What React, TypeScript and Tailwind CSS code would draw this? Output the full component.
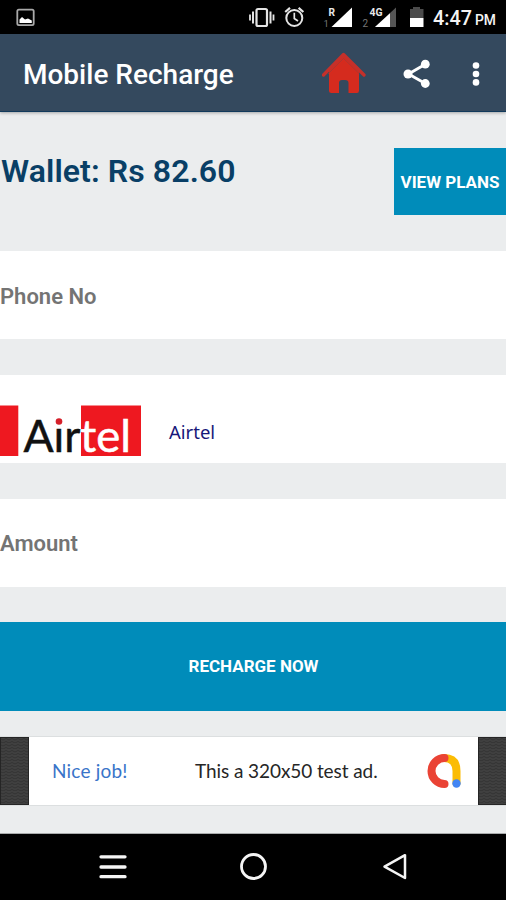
import React from "react";

function StatusBar() {
  return (
    <header className="h-[34px] w-full bg-black">
      <svg className="block" width="506" height="34" viewBox="0 0 506 34" fontFamily="Roboto, sans-serif">
        <rect x="17.3" y="9.6" width="16.4" height="15.6" rx="1.6" fill="none" stroke="#a9a9a9" strokeWidth="1.8" />
        <path d="M19.5 23V19.5L22 17L25 19.5L28 18.5L31.8 20.5V23Z" fill="#fff" />
        <g fill="none" stroke="#e4e4e4">
          <rect x="256.5" y="9" width="10.5" height="17" rx="1.5" strokeWidth="2.2" />
          <path d="M253 11.5V23.5M270.5 11.5V23.5" strokeWidth="2" />
          <path d="M250 14.5V20.5M273.5 14.5V20.5" strokeWidth="1.8" />
          <circle cx="294.3" cy="18" r="8" strokeWidth="2" />
          <path d="M294.3 12.8V18.5L298 21" strokeWidth="1.7" />
          <path d="M285.2 12L290 7.9M298.6 7.9L303.4 12" strokeWidth="2.2" />
        </g>
        <path d="M352 7.5V27H331.5Z" fill="#fff" />
        <text x="328.5" y="15.8" fontSize="11.5" fontWeight="700" fill="#e8e8e8" textLength="6.5" lengthAdjust="spacingAndGlyphs">R</text>
        <text x="323.5" y="27" fontSize="9.5" fill="#777">1</text>
        <path d="M396 7.5V27H375Z" fill="#555" />
        <path d="M390 13.2V27H375Z" fill="#fff" />
        <text x="369.5" y="15.8" fontSize="11.5" fontWeight="700" fill="#e8e8e8" textLength="13" lengthAdjust="spacingAndGlyphs">4G</text>
        <text x="362.5" y="27" fontSize="10" fill="#777">2</text>
        <path d="M410 9H413V7H420V9H423.5V18H410Z" fill="#4b4b4b" />
        <path d="M410 18H423.5V27H410Z" fill="#fff" />
        <text x="433" y="25" fontSize="19.5" fontWeight="500" fill="#f4f4f4" textLength="39" lengthAdjust="spacingAndGlyphs">4:47</text>
        <text x="475" y="25" fontSize="14" fontWeight="500" fill="#f4f4f4" textLength="21" lengthAdjust="spacingAndGlyphs">PM</text>
      </svg>
    </header>
  );
}

function AppBar() {
  return (
    <div className="flex h-[78px] items-center border-b border-[#123a5b] bg-[#34495e] pl-[23px] shadow-[0_1px_3px_rgba(0,0,0,0.3)]">
      <h1 className="w-[299px] whitespace-nowrap pt-[5px] text-[28px] font-medium leading-8 text-white">Mobile Recharge</h1>
      <svg width="44" height="42" viewBox="0 0 44 42" fill="#d52b1e">
        <path d="M21.5 2.2L7 16V38.5Q7 41 9.5 41H17V31Q17 28 20 28H23Q26.5 28 26.5 31V41H35Q37 41 37 38.5V16Z" />
        <path d="M1.5 23L21.5 2.5L42 23" fill="none" stroke="#c5302a" strokeWidth="3.3" strokeLinecap="round" strokeLinejoin="round" />
        <path d="M6 22L21.5 6.5L37.5 22" fill="none" stroke="#963a3b" strokeWidth="0.6" />
      </svg>
      <svg className="ml-[36px] mt-[2px]" width="30" height="34" viewBox="0 0 30 34">
        <path d="M23.3 7.2L6.5 17L23.3 26.5" fill="none" stroke="#fff" strokeWidth="2.9" />
        <g fill="#fff">
          <circle cx="23.3" cy="7.2" r="4.4" />
          <circle cx="6" cy="17" r="4.5" />
          <circle cx="23.3" cy="26.5" r="4.4" />
        </g>
      </svg>
      <svg className="ml-[38px] mt-[2px]" width="12" height="30" viewBox="0 0 12 30" fill="#fff">
        <circle cx="6" cy="6.5" r="3.3" />
        <circle cx="6" cy="15" r="3.3" />
        <circle cx="6" cy="23.4" r="3.3" />
      </svg>
    </div>
  );
}

function AirtelLogo() {
  return (
    <svg width="141" height="58" viewBox="0 0 141 58" fontFamily="Lato, sans-serif" fontSize="44">
      <path d="M0 0.500H18.300V51H0ZM81 0.500H141V51H81Z" fill="#ee1820" />
      <text x="23.500" y="47" fill="#111" stroke="#111" strokeWidth="0.500" textLength="57" lengthAdjust="spacingAndGlyphs">Aır</text>
      <text x="80" y="47" fill="#fff" stroke="#fff" strokeWidth="0.500" textLength="51" lengthAdjust="spacingAndGlyphs">tel</text>
      <circle cx="59" cy="16.500" r="3.300" fill="#d51f29" />
    </svg>
  );
}

function AdPattern() {
  return (
    <svg className="shrink-0" width="29" height="68">
      <defs>
        <pattern id="mesh" width="6" height="6" patternUnits="userSpaceOnUse">
          <path d="M0 1.500L3 3L6 1.500M0 4.500L3 6L6 4.500" fill="none" stroke="#323232" strokeWidth="1" />
        </pattern>
      </defs>
      <rect width="29" height="68" fill="#404040" />
      <rect width="29" height="68" fill="url(#mesh)" />
      <rect x="0.500" y="0.500" width="28" height="67" fill="none" stroke="#252525" />
    </svg>
  );
}

function AdBanner() {
  return (
    <div className="mt-[25px] flex h-[70px] overflow-hidden border-y border-[#dcdfe0] bg-white">
      <AdPattern />
      <div className="flex w-[449px] shrink-0 items-center whitespace-nowrap font-[Lato,sans-serif] text-[19px]">
        <span className="w-[142px] pl-[23px] pt-[1px] tracking-[0.2px] text-[#3974c9]">Nice job!</span>
        <span className="w-[254px] pl-[24px] pt-[1px] tracking-[-0.08px] text-[#262626]">This a 320x50 test ad.</span>
        <svg width="38" height="40" viewBox="0 0 38 40" fill="none" strokeLinecap="round" strokeWidth="8">
          <path d="M19 7Q31.5 7 31.5 20V32" stroke="#fbbc04" />
          <path d="M19.5 7A13 13 0 0 0 19.5 33" stroke="#ea4335" />
          <circle cx="31.5" cy="32.5" r="4.2" fill="#4285f4" />
        </svg>
      </div>
      <AdPattern />
    </div>
  );
}

function NavigationBar() {
  return (
    <nav className="h-[66px] bg-black">
      <svg className="block" width="506" height="66" viewBox="0 0 506 66" fill="none" stroke="#f5f5f5">
        <path d="M101 22.8H125M101 33H125M101 42.7H125" strokeWidth="3.3" strokeLinecap="round" />
        <circle cx="253.5" cy="32.5" r="12" strokeWidth="2.8" />
        <path d="M405 21.2V44L384.5 32.6Z" strokeWidth="2.5" strokeLinejoin="round" />
      </svg>
    </nav>
  );
}

export default function App() {
  return (
    <div className="flex h-[900px] w-[506px] flex-col overflow-hidden bg-[#ebedee] font-[Roboto,sans-serif]">
      <StatusBar />
      <AppBar />
      <main className="h-[722px] border-b border-[#a9abac]">
        <div className="flex h-[139px] items-start justify-between pt-[36px]">
          <div className="whitespace-nowrap pl-[1px] pt-[4px] text-[32px] font-semibold leading-[38px] tracking-[0.1px] text-[#093f66]">Wallet: Rs 82.60</div>
          <button className="h-[67px] w-[112px] whitespace-nowrap bg-[#008cba] pt-[3px] text-[17px] font-bold text-white">VIEW PLANS</button>
        </div>
        <div className="flex h-[88px] items-center bg-white pt-[2px] text-[22px] font-semibold text-[#747474]">Phone No</div>
        <div className="mt-[36px] flex h-[88px] items-start bg-white pt-[30px]">
          <AirtelLogo />
          <span className="ml-[28px] mt-[13px] font-['Noto_Sans',sans-serif] text-[18.5px] leading-7 text-[#171779]">Airtel</span>
        </div>
        <div className="mt-[36px] flex h-[88px] items-center bg-white text-[22px] font-semibold text-[#747474]">Amount</div>
        <button className="mt-[35px] flex h-[89px] w-full items-center justify-center bg-[#008cba] pl-[1px] pt-[1px] text-[17px] font-bold text-white">RECHARGE NOW</button>
        <AdBanner />
      </main>
      <NavigationBar />
    </div>
  );
}
